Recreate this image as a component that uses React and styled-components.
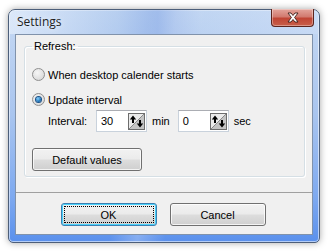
import styled, { createGlobalStyle } from "styled-components";

const GlobalStyle = createGlobalStyle`
  body {
    margin: 0;
    background: #ffffff;
    font-family: "Liberation Sans", Arial, sans-serif;
  }
`;

const Page = styled.div`
  padding: 9px 9px 8px 8px;
`;

const Window = styled.div`
  width: 312px;
  height: 234px;
  box-sizing: border-box;
  display: flex;
  flex-direction: column;
  border: 1px solid #4d5f7a;
  border-radius: 7px 7px 5px 5px;
  background:
    linear-gradient(100deg, transparent 40%, rgba(255, 255, 255, 0.25) 48%, transparent 56%),
    linear-gradient(to bottom, #c6d9f3 0%, #a9c5ef 45%, #7faaf0 80%, #5a90ec 100%);
  box-shadow: 0 0 7px rgba(0, 0, 0, 0.35), inset 0 0 0 1px rgba(255, 255, 255, 0.55);
`;

const TitleBar = styled.div`
  height: 24px;
  flex: none;
  display: flex;
  justify-content: space-between;
  align-items: flex-start;
  padding-left: 8px;
  padding-right: 5px;
  background: linear-gradient(
    90deg,
    rgba(235, 243, 253, 0.6) 0%,
    rgba(150, 183, 232, 0.3) 35%,
    rgba(110, 150, 225, 0.45) 48%,
    rgba(180, 205, 240, 0.3) 62%,
    rgba(210, 225, 248, 0.4) 100%
  );
  border-radius: 6px 6px 0 0;
`;

const Title = styled.span`
  font-family: "Open Sans", "Liberation Sans", sans-serif;
  font-size: 12px;
  color: #1e1e1e;
  line-height: 24px;
  text-shadow: 0 0 6px rgba(255, 255, 255, 0.9);
`;

const CloseButton = styled.div`
  width: 43px;
  height: 18px;
  box-sizing: border-box;
  margin-top: -1px;
  border: 1px solid #5c241d;
  border-top: none;
  border-radius: 0 0 4px 4px;
  background: linear-gradient(to bottom, #e3a59c 0%, #d27b70 45%, #c04535 55%, #c85f4a 100%);
  box-shadow: inset 0 0 0 1px rgba(255, 255, 255, 0.35);
  display: flex;
  align-items: center;
  justify-content: center;
`;

const Client = styled.div`
  flex: 1;
  margin: 0 6px 7px 6px;
  background: #f0f0f0;
  border: 1px solid #8092ab;
  display: flex;
  flex-direction: column;
  font-size: 11px;
  color: #000;
`;

const GroupBox = styled.fieldset`
  margin: 5px 7px 0 8px;
  padding: 0 0 5px 7px;
  border: 1px solid #d5dfe5;
  border-radius: 3px;
  box-shadow: 1px 1px 0 #ffffff inset, 1px 1px 0 #ffffff;
  display: flex;
  flex-direction: column;
  align-items: flex-start;
`;

const Legend = styled.legend`
  padding: 0 2px;
  margin-left: 0;
  line-height: 13px;
`;

const RadioRow = styled.label`
  display: flex;
  align-items: center;
  gap: 3px;
  height: 13px;
  margin-top: ${(p) => p.$top}px;
`;

const RadioCircle = styled.span`
  width: 13px;
  height: 13px;
  box-sizing: border-box;
  border-radius: 50%;
  border: 1px solid #8f8f8f;
  background: radial-gradient(circle at 40% 35%, #f6f6f6 0%, #e0e0e0 60%, #cfcfcf 100%);
  display: flex;
  align-items: center;
  justify-content: center;

  &::after {
    content: "";
    display: ${(p) => (p.$checked ? "block" : "none")};
    width: 5px;
    height: 5px;
    border-radius: 50%;
    background: radial-gradient(circle at 40% 35%, #8ad2ff 0%, #1b73b8 60%, #0b3f7a 100%);
    box-shadow: 0 0 0 1px #1a4f86;
  }
`;

const IntervalRow = styled.div`
  display: flex;
  align-items: center;
  margin-top: 4px;
  padding-left: 16px;
  height: 22px;
`;

const FieldLabel = styled.span`
  width: 48px;
`;

const NumberBox = styled.div`
  width: 51px;
  height: 22px;
  box-sizing: border-box;
  border: 1px solid #c9d2dc;
  border-top-color: #abadb3;
  background: #ffffff;
  display: flex;
  align-items: center;
  justify-content: space-between;
  padding: 0 1px 0 4px;
`;

const Unit = styled.span`
  margin: 0 ${(p) => p.$after}px 0 5px;
`;

const Button = styled.div`
  width: ${(p) => p.$w}px;
  height: 23px;
  box-sizing: border-box;
  border: 1px solid ${(p) => (p.$default ? "#3c7fb1" : "#707070")};
  border-radius: 3px;
  background: linear-gradient(to bottom, #f2f2f2 0%, #ebebeb 48%, #dddddd 52%, #cfcfcf 100%);
  box-shadow: inset 0 0 0 1px ${(p) => (p.$default ? "#48d2fb" : "rgba(255,255,255,0.75)")};
  display: flex;
  align-items: center;
  justify-content: center;
  padding: 2px;
`;

const FocusRing = styled.div`
  flex: 1;
  align-self: stretch;
  border: 1px dotted #000;
  display: flex;
  align-items: center;
  justify-content: center;
`;

const DefaultButton = styled(Button)`
  margin-top: 16px;
`;

const Footer = styled.div`
  margin-top: 15px;
  border-top: 1px solid #a0a0a0;
  display: flex;
  justify-content: center;
  gap: 13px;
  padding: 10px 2px 0 0;
`;

function Spinner() {
  return (
    <svg width="17" height="17" viewBox="0 0 17 17">
      <rect x="0.5" y="0.5" width="16" height="16" fill="#ebebeb" stroke="#6d6d6d" />
      <polygon points="1,16 16,1 16,16" fill="#c4c4c4" />
      <line x1="1" y1="16" x2="16" y2="1" stroke="#8a8a8a" />
      <path d="M5 2.5 L1.8 6.5 H4 V10 H6 V6.5 H8.2 Z" fill="#000" />
      <path d="M12 14.5 L8.8 10.5 H11 V7 H13 V10.5 H15.2 Z" fill="#000" />
    </svg>
  );
}

function Radio({ checked, top, children }) {
  return (
    <RadioRow $top={top}>
      <RadioCircle $checked={checked} />
      <span>{children}</span>
    </RadioRow>
  );
}

export default function App() {
  return (
    <Page>
      <GlobalStyle />
      <Window>
        <TitleBar>
          <Title>Settings</Title>
          <CloseButton>
            <svg width="14" height="11" viewBox="0 0 14 11">
              <path
                d="M2 1 L5 1 L7 3.5 L9 1 L12 1 L8.6 5.5 L12 10 L9 10 L7 7.5 L5 10 L2 10 L5.4 5.5 Z"
                fill="#ffffff"
                stroke="#3b1d18"
                strokeWidth="0.9"
                strokeLinejoin="round"
              />
            </svg>
          </CloseButton>
        </TitleBar>
        <Client>
          <GroupBox>
            <Legend>Refresh:</Legend>
            <Radio top={15}>When desktop calender starts</Radio>
            <Radio checked top={12}>Update interval</Radio>
            <IntervalRow>
              <FieldLabel>Interval:</FieldLabel>
              <NumberBox>
                <span>30</span>
                <Spinner />
              </NumberBox>
              <Unit $after={8}>min</Unit>
              <NumberBox>
                <span>0</span>
                <Spinner />
              </NumberBox>
              <Unit $after={0}>sec</Unit>
            </IntervalRow>
            <DefaultButton $w={110}>Default values</DefaultButton>
          </GroupBox>
          <Footer>
            <Button $w={96} $default>
              <FocusRing>OK</FocusRing>
            </Button>
            <Button $w={96}>Cancel</Button>
          </Footer>
        </Client>
      </Window>
    </Page>
  );
}
